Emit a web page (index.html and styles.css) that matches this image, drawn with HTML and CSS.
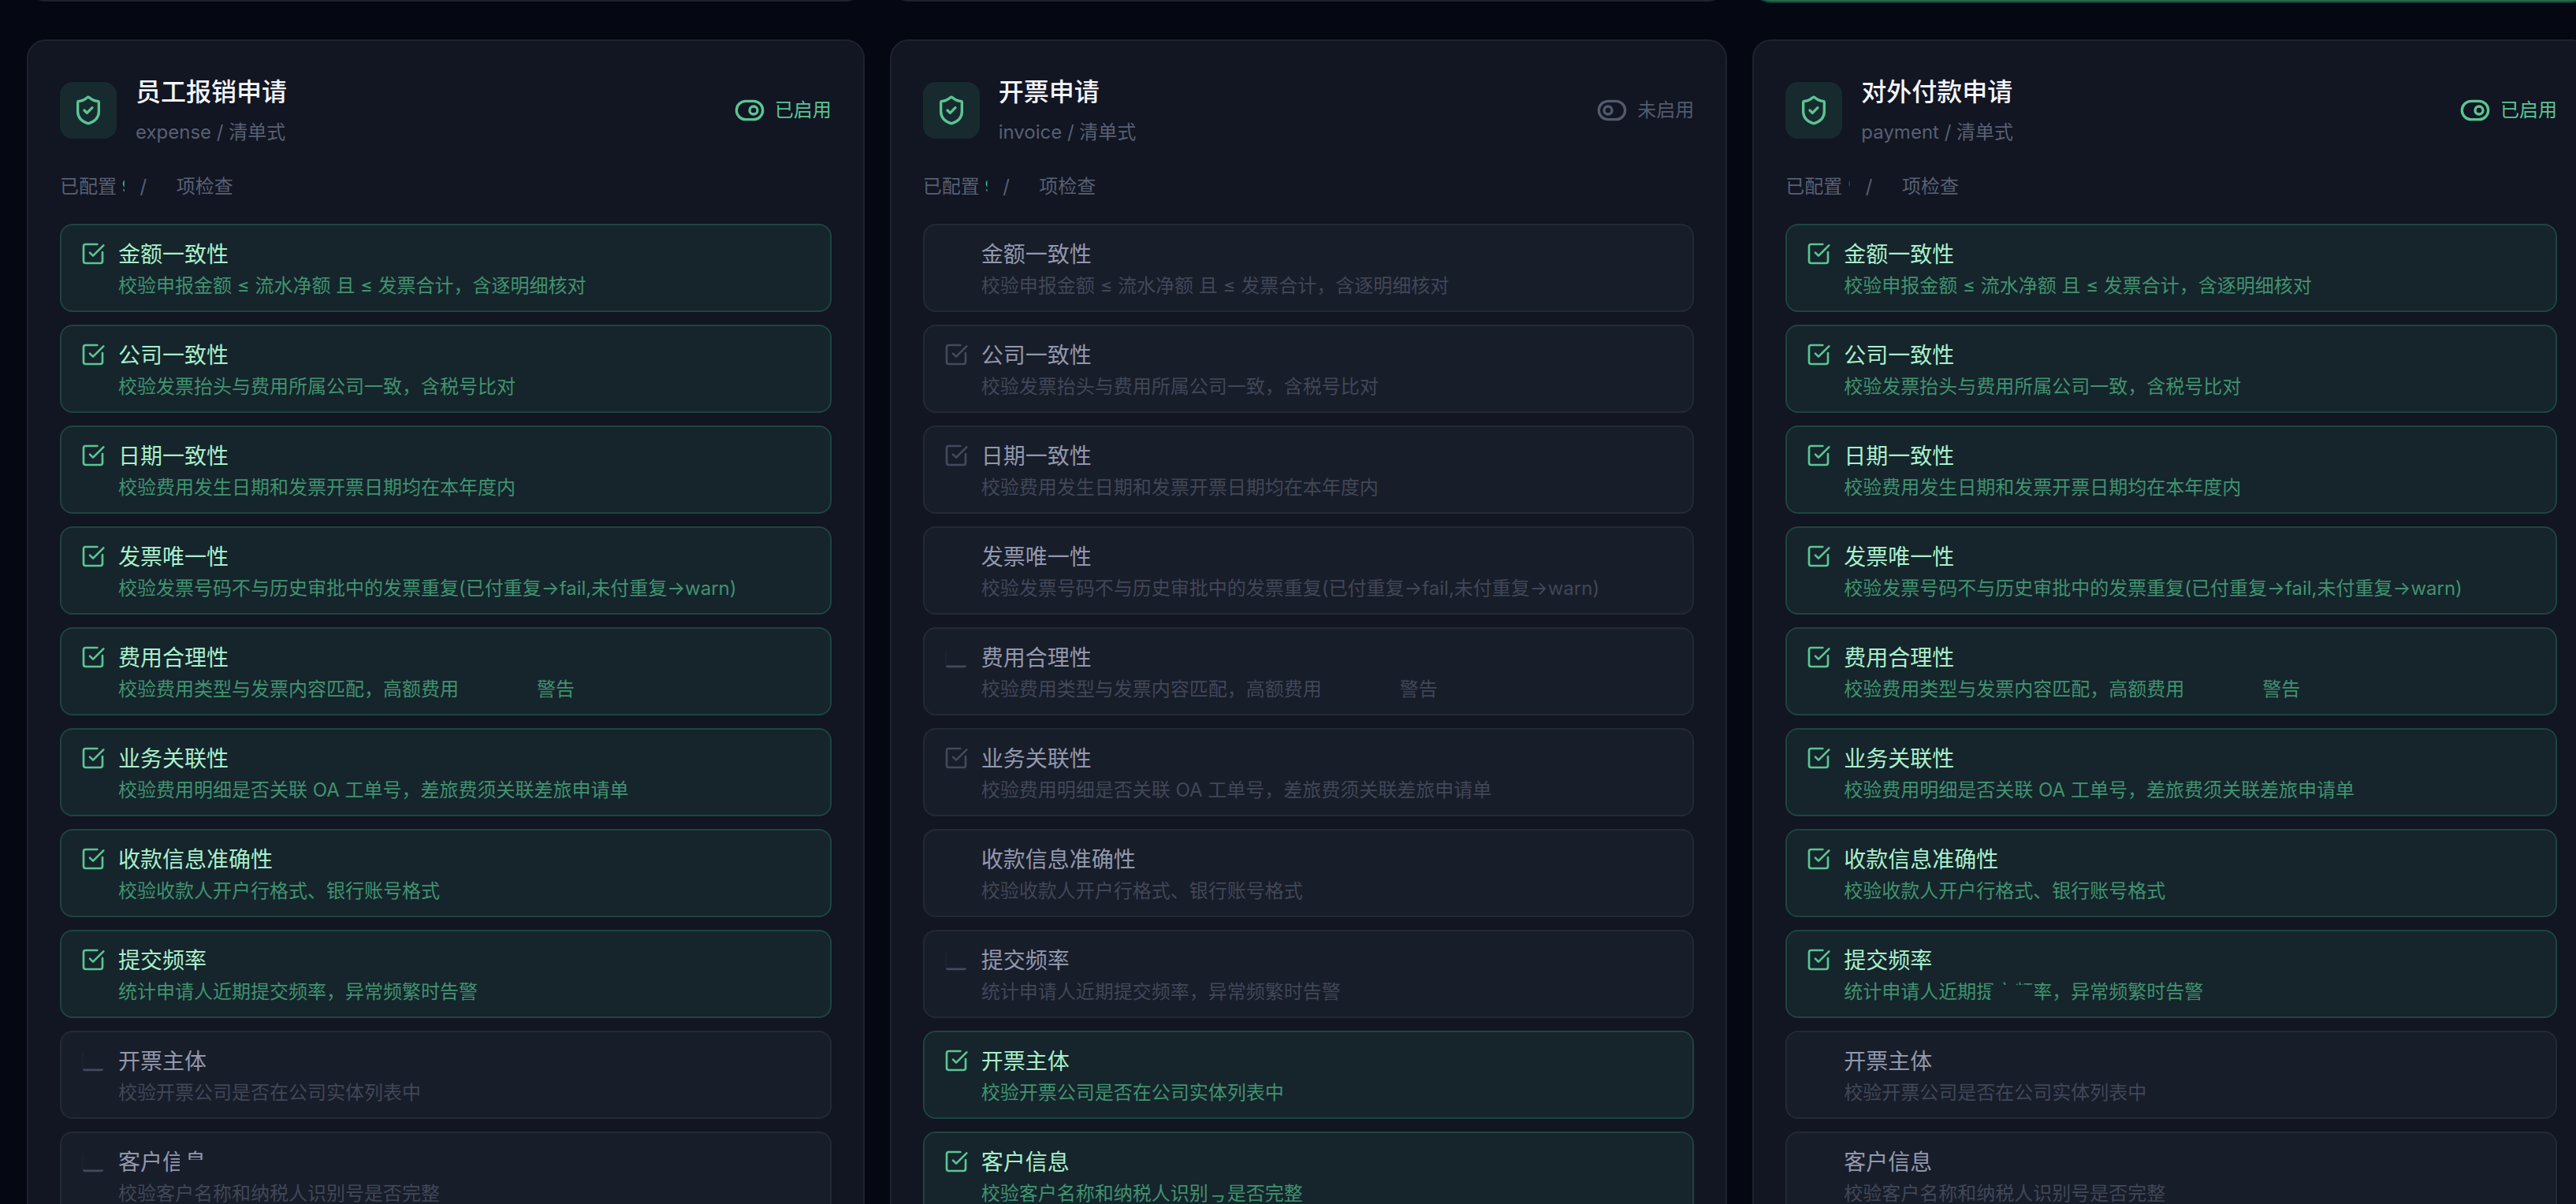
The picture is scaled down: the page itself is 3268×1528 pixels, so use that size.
FILE: index.html
```html
<!doctype html>
<html lang="zh-CN">
<head>
  <meta charset="utf-8">
  <title>审批检查配置</title>
  <link rel="stylesheet" href="styles.css">
</head>
<body>

  <svg class="sprite" aria-hidden="true">
    <symbol id="shield" viewBox="0 0 24 24">
      <path d="M20 13c0 5-3.500 7.500-7.660 8.950a1 1 0 0 1-.67-.01C7.500 20.500 4 18 4 13V6a1 1 0 0 1 1-1c2 0 4.500-1.200 6.240-2.720a1.170 1.170 0 0 1 1.520 0C14.510 3.810 17 5 19 5a1 1 0 0 1 1 1z"/>
      <path d="m9 12 2 2 4-4"/>
    </symbol>
    <symbol id="toggle-on" viewBox="0 0 24 24">
      <rect width="20" height="14" x="2" y="5" rx="7"/>
      <circle cx="15" cy="12" r="3"/>
    </symbol>
    <symbol id="toggle-off" viewBox="0 0 24 24">
      <rect width="20" height="14" x="2" y="5" rx="7"/>
      <circle cx="9" cy="12" r="3"/>
    </symbol>
    <symbol id="check" viewBox="0 0 24 24">
      <path d="M21 10.500V19a2 2 0 0 1-2 2H5a2 2 0 0 1-2-2V5a2 2 0 0 1 2-2h11"/>
      <path d="m9 11 3 3L22 4"/>
    </symbol>
    <symbol id="base" viewBox="0 0 24 24">
      <path d="M2.200 19.800H5h14h2.800a2.800 2.200 0 0 1-2.800 2.200H5a2.800 2.200 0 0 1-2.800-2.200z" fill="currentColor" stroke="none"/>
      <path d="M2.200 5v14" stroke-width=".4" opacity=".5"/>
    </symbol>
  </svg>

  <main class="page">
    <div class="row row-prev">
      <section class="card"></section>
      <section class="card"></section>
      <section class="card selected"></section>
    </div>

    <div class="row">
      <section class="card">
        <header class="head">
          <span class="badge"><svg><use href="#shield"/></svg></span>
          <div class="name"><h2>员工报销申请</h2><p>expense / 清单式</p></div>
          <label class="switch on"><input type="checkbox" checked><svg><use href="#toggle-on"/></svg>已启用</label>
        </header>
        <p class="count">已配置 <b class="num">9</b> / <span class="total"></span> 项检查</p>
        <div class="list">
          <label class="item on"><input type="checkbox" checked><svg><use href="#check"/></svg><span class="text"><strong>金额一致性</strong><small>校验申报金额 ≤ 流水净额 且 ≤ 发票合计，含逐明细核对</small></span></label>
          <label class="item on"><input type="checkbox" checked><svg><use href="#check"/></svg><span class="text"><strong>公司一致性</strong><small>校验发票抬头与费用所属公司一致，含税号比对</small></span></label>
          <label class="item on"><input type="checkbox" checked><svg><use href="#check"/></svg><span class="text"><strong>日期一致性</strong><small>校验费用发生日期和发票开票日期均在本年度内</small></span></label>
          <label class="item on"><input type="checkbox" checked><svg><use href="#check"/></svg><span class="text"><strong>发票唯一性</strong><small>校验发票号码不与历史审批中的发票重复(已付重复→fail,未付重复→warn)</small></span></label>
          <label class="item on"><input type="checkbox" checked><svg><use href="#check"/></svg><span class="text"><strong>费用合理性</strong><small>校验费用类型与发票内容匹配，高额费用<span class="blank"></span>警告</small></span></label>
          <label class="item on"><input type="checkbox" checked><svg><use href="#check"/></svg><span class="text"><strong>业务关联性</strong><small>校验费用明细是否关联 OA 工单号，差旅费须关联差旅申请单</small></span></label>
          <label class="item on"><input type="checkbox" checked><svg><use href="#check"/></svg><span class="text"><strong>收款信息准确性</strong><small>校验收款人开户行格式、银行账号格式</small></span></label>
          <label class="item on"><input type="checkbox" checked><svg><use href="#check"/></svg><span class="text"><strong>提交频率</strong><small>统计申请人近期提交频率，异常频繁时告警</small></span></label>
          <label class="item"><input type="checkbox"><svg><use href="#base"/></svg><span class="text"><strong>开票主体</strong><small>校验开票公司是否在公司实体列表中</small></span></label>
          <label class="item"><input type="checkbox"><svg><use href="#base"/></svg><span class="text"><strong>客户<span class="cut cut-right">信</span><span class="cut cut-bottom">息</span></strong><small>校验客户名称和纳税人识别号是否完整</small></span></label>
        </div>
      </section>

      <section class="card">
        <header class="head">
          <span class="badge"><svg><use href="#shield"/></svg></span>
          <div class="name"><h2>开票申请</h2><p>invoice / 清单式</p></div>
          <label class="switch"><input type="checkbox"><svg><use href="#toggle-off"/></svg>未启用</label>
        </header>
        <p class="count">已配置 <b class="num">9</b> / <span class="total"></span> 项检查</p>
        <div class="list">
          <label class="item"><input type="checkbox"><svg></svg><span class="text"><strong>金额一致性</strong><small>校验申报金额 ≤ 流水净额 且 ≤ 发票合计，含逐明细核对</small></span></label>
          <label class="item"><input type="checkbox"><svg><use href="#check"/></svg><span class="text"><strong>公司一致性</strong><small>校验发票抬头与费用所属公司一致，含税号比对</small></span></label>
          <label class="item"><input type="checkbox"><svg><use href="#check"/></svg><span class="text"><strong>日期一致性</strong><small>校验费用发生日期和发票开票日期均在本年度内</small></span></label>
          <label class="item"><input type="checkbox"><svg></svg><span class="text"><strong>发票唯一性</strong><small>校验发票号码不与历史审批中的发票重复(已付重复→fail,未付重复→warn)</small></span></label>
          <label class="item"><input type="checkbox"><svg><use href="#base"/></svg><span class="text"><strong>费用合理性</strong><small>校验费用类型与发票内容匹配，高额费用<span class="blank"></span>警告</small></span></label>
          <label class="item"><input type="checkbox"><svg><use href="#check"/></svg><span class="text"><strong>业务关联性</strong><small>校验费用明细是否关联 OA 工单号，差旅费须关联差旅申请单</small></span></label>
          <label class="item"><input type="checkbox"><svg></svg><span class="text"><strong>收款信息准确性</strong><small>校验收款人开户行格式、银行账号格式</small></span></label>
          <label class="item"><input type="checkbox"><svg><use href="#base"/></svg><span class="text"><strong>提交频率</strong><small>统计申请人近期提交频率，异常频繁时告警</small></span></label>
          <label class="item on"><input type="checkbox" checked><svg><use href="#check"/></svg><span class="text"><strong>开票主体</strong><small>校验开票公司是否在公司实体列表中</small></span></label>
          <label class="item on"><input type="checkbox" checked><svg><use href="#check"/></svg><span class="text"><strong>客户信息</strong><small>校验客户名称和纳税人识别<span class="cut cut-top">号</span>是否完整</small></span></label>
        </div>
      </section>

      <section class="card">
        <header class="head">
          <span class="badge"><svg><use href="#shield"/></svg></span>
          <div class="name"><h2>对外付款申请</h2><p>payment / 清单式</p></div>
          <label class="switch on"><input type="checkbox" checked><svg><use href="#toggle-on"/></svg>已启用</label>
        </header>
        <p class="count">已配置 <b class="num faint">9</b> / <span class="total"></span> 项检查</p>
        <div class="list">
          <label class="item on"><input type="checkbox" checked><svg><use href="#check"/></svg><span class="text"><strong>金额一致性</strong><small>校验申报金额 ≤ 流水净额 且 ≤ 发票合计，含逐明细核对</small></span></label>
          <label class="item on"><input type="checkbox" checked><svg><use href="#check"/></svg><span class="text"><strong>公司一致性</strong><small>校验发票抬头与费用所属公司一致，含税号比对</small></span></label>
          <label class="item on"><input type="checkbox" checked><svg><use href="#check"/></svg><span class="text"><strong>日期一致性</strong><small>校验费用发生日期和发票开票日期均在本年度内</small></span></label>
          <label class="item on"><input type="checkbox" checked><svg><use href="#check"/></svg><span class="text"><strong>发票唯一性</strong><small>校验发票号码不与历史审批中的发票重复(已付重复→fail,未付重复→warn)</small></span></label>
          <label class="item on"><input type="checkbox" checked><svg><use href="#check"/></svg><span class="text"><strong>费用合理性</strong><small>校验费用类型与发票内容匹配，高额费用<span class="blank"></span>警告</small></span></label>
          <label class="item on"><input type="checkbox" checked><svg><use href="#check"/></svg><span class="text"><strong>业务关联性</strong><small>校验费用明细是否关联 OA 工单号，差旅费须关联差旅申请单</small></span></label>
          <label class="item on"><input type="checkbox" checked><svg><use href="#check"/></svg><span class="text"><strong>收款信息准确性</strong><small>校验收款人开户行格式、银行账号格式</small></span></label>
          <label class="item on"><input type="checkbox" checked><svg><use href="#check"/></svg><span class="text"><strong>提交频率</strong><small>统计申请人近期<span class="cut cut-hole">提交频率</span>，异常频繁时告警</small></span></label>
          <label class="item"><input type="checkbox"><svg></svg><span class="text"><strong>开票主体</strong><small>校验开票公司是否在公司实体列表中</small></span></label>
          <label class="item"><input type="checkbox"><svg></svg><span class="text"><strong>客户信息</strong><small>校验客户名称和纳税人识别号是否完整</small></span></label>
        </div>
      </section>
    </div>
  </main>

</body>
</html>
```

FILE: styles.css
```css
* {
  box-sizing: border-box;
}

html, body {
  height: 100%;
}

body {
  margin: 0;
  overflow: hidden;
  background: #050713;
  color: #576073;
  font: 24px/32px Inter, "Noto Sans CJK SC", sans-serif;
}

h2, p {
  margin: 0;
}

svg {
  flex: none;
  fill: none;
  stroke: currentColor;
  stroke-width: 2;
  stroke-linecap: round;
  stroke-linejoin: round;
}

.sprite {
  position: absolute;
  width: 0;
  height: 0;
}

/* the board runs a little past the right edge */
.page {
  margin: 0 -18px 0 34px;
}

.row {
  display: grid;
  grid-template-columns: repeat(3, 1fr);
  gap: 32px;
}

.row-prev {
  height: 50px;
  margin-top: -48px;
  margin-bottom: 48px;
}

.card {
  padding: 40px;
  border: 2px solid #1f222e;
  border-radius: 24px;
  background: #121522;
}

.row-prev .card {
  padding: 0;
}

.selected {
  border-color: #24694f;
  box-shadow: 0 0 0 2px #123a31;
}

/* header */
.head {
  display: flex;
  align-items: center;
  gap: 24px;
}

.badge {
  display: flex;
  align-items: center;
  justify-content: center;
  width: 72px;
  height: 72px;
  border-radius: 16px;
  background: #172b2f;
  color: #5bc594;
}

.badge svg, .switch svg {
  width: 40px;
  height: 40px;
}

.name {
  flex: 1;
}

.name h2 {
  color: #f3f5fb;
  font-size: 32px;
  line-height: 50px;
  font-weight: 500;
}

.name p {
  margin-top: 6px;
  line-height: 40px;
}

.switch {
  position: relative;
  display: flex;
  align-items: center;
  gap: 12px;
  color: #525a6c;
}

.switch.on {
  color: #5bc594;
}

/* the native box lies invisibly over its icon */
.switch input, .item input {
  position: absolute;
  width: 32px;
  height: 32px;
  margin: 2px 0;
  opacity: 0;
}

.count {
  margin: 33px 0 31px;
  white-space: nowrap;
}

.num, .total {
  display: inline-block;
  width: 16px;
  height: 32px;
  vertical-align: top;
}

.total {
  width: 24px;
}

.num {
  clip-path: inset(0 13px 0 0);
  color: #4fc08d;
  font-weight: 500;
}

.num.faint {
  clip-path: inset(0 13px 16px 0);
  opacity: .3;
}

/* checks */
.list {
  display: flex;
  flex-direction: column;
  gap: 16px;
}

.item {
  position: relative;
  display: flex;
  gap: 16px;
  padding: 17px 24px 15px;
  border: 2px solid #242936;
  border-radius: 16px;
  background: #181d2a;
  color: #424a5b;
}

.item svg {
  width: 32px;
  height: 32px;
  margin-top: 3px;
}

.text strong, .text small {
  display: block;
  font-weight: 400;
}

.text strong {
  color: #9198ac;
  font-size: 28px;
  line-height: 40px;
}

.text small {
  margin-top: 4px;
  color: #414757;
  font-size: 24px;
  line-height: 32px;
}

.item.on {
  border-color: #1e4440;
  background: #15252b;
  color: #5bc594;
}

.item.on strong {
  color: #a9efcb;
}

.item.on small {
  color: #419270;
}

.blank {
  display: inline-block;
  width: 99px;
}

.cut {
  display: inline-block;
}

.cut-right {
  clip-path: inset(0 6px 0 0);
}

.cut-bottom {
  clip-path: inset(0 0 23px 0);
}

.cut-top {
  clip-path: inset(18px 0 0 0);
}

.cut-hole {
  clip-path: polygon(0 0, 100% 0, 100% 100%, 74px 100%, 74px 7px, 18px 7px, 18px 100%, 0 100%);
}
```
